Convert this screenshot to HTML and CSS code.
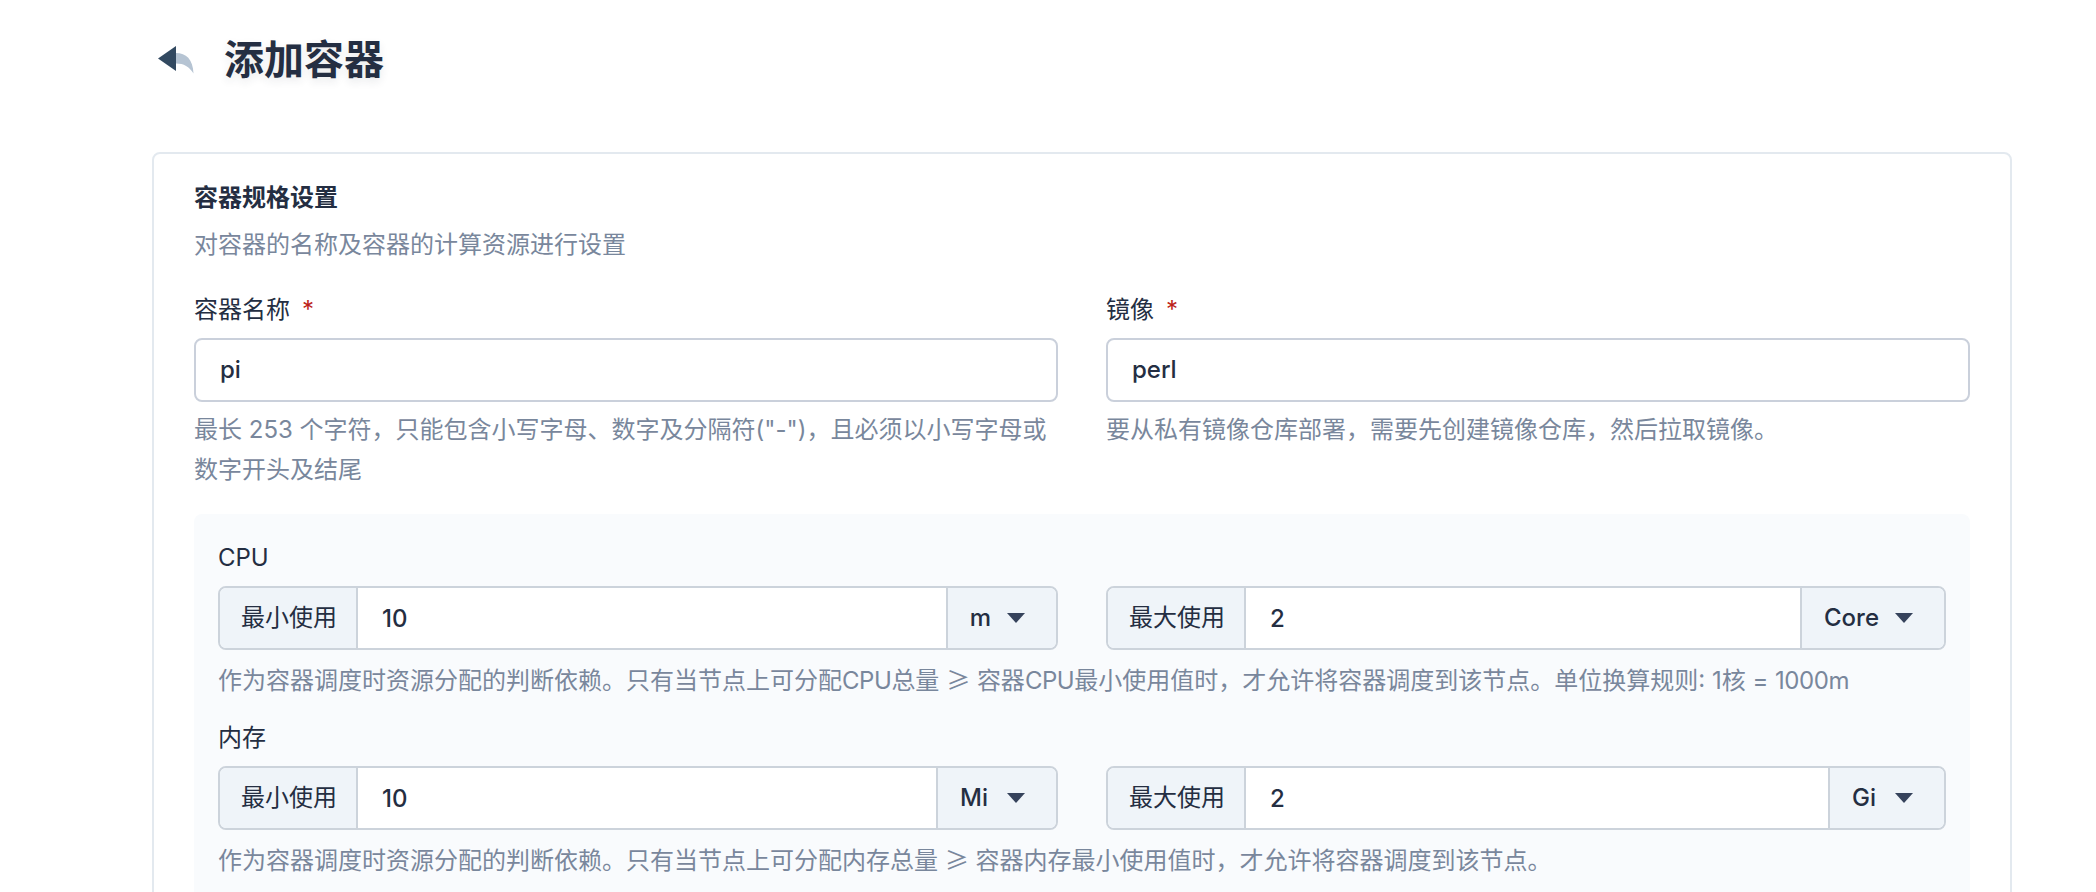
FILE: index.html
```html
<!DOCTYPE html>
<html lang="zh-CN">
<head>
<meta charset="utf-8">
<title>添加容器</title>
<link rel="stylesheet" href="styles.css">
</head>
<body>
<div class="page">
  <header class="header">
    <svg class="back" viewBox="0 0 36 28" aria-hidden="true">
      <path fill="#b6c4d3" d="M18 7C28 7 35 13 35.500 27.500C31 20.500 26 17.500 18 17.500Z"/>
      <path fill="#324960" d="M0 12.500L18 0V25Z"/>
    </svg>
    <h1 class="page-title">添加容器</h1>
  </header>
  <main class="card">
    <h2 class="section-title">容器规格设置</h2>
    <p class="section-desc">对容器的名称及容器的计算资源进行设置</p>
    <div class="cols">
      <div class="field">
        <label class="label">容器名称<span class="req">*</span></label>
        <div class="input">pi</div>
        <p class="hint">最长 253 个字符，只能包含小写字母、数字及分隔符("-")，且必须以小写字母或数字开头及结尾</p>
      </div>
      <div class="field">
        <label class="label">镜像<span class="req">*</span></label>
        <div class="input">perl</div>
        <p class="hint">要从私有镜像仓库部署，需要先创建镜像仓库，然后拉取镜像。</p>
      </div>
    </div>
    <section class="resources">
      <div class="res-label">CPU</div>
      <div class="cols">
        <div class="group">
          <span class="addon">最小使用</span>
          <span class="value">10</span>
          <span class="unit">m<svg class="caret" viewBox="0 0 18 10"><path d="M0 0H18L9 10Z"/></svg></span>
        </div>
        <div class="group">
          <span class="addon">最大使用</span>
          <span class="value">2</span>
          <span class="unit">Core<svg class="caret" viewBox="0 0 18 10"><path d="M0 0H18L9 10Z"/></svg></span>
        </div>
      </div>
      <p class="res-hint">作为容器调度时资源分配的判断依赖。只有当节点上可分配<span class="tight">CPU</span>总量 <span class="ge">≥</span> 容器<span class="tight">CPU</span>最小使用值时，才允许将容器调度到该节点。单位换算规则: 1核 = <span class="tight">1000m</span></p>
      <div class="res-label">内存</div>
      <div class="cols">
        <div class="group">
          <span class="addon">最小使用</span>
          <span class="value">10</span>
          <span class="unit unit-short">Mi<svg class="caret" viewBox="0 0 18 10"><path d="M0 0H18L9 10Z"/></svg></span>
        </div>
        <div class="group">
          <span class="addon">最大使用</span>
          <span class="value">2</span>
          <span class="unit unit-short">Gi<svg class="caret" viewBox="0 0 18 10"><path d="M0 0H18L9 10Z"/></svg></span>
        </div>
      </div>
      <p class="res-hint">作为容器调度时资源分配的判断依赖。只有当节点上可分配内存总量 <span class="ge">≥</span> 容器内存最小使用值时，才允许将容器调度到该节点。</p>
    </section>
  </main>
</div>
</body>
</html>
```

FILE: styles.css
```css
* { box-sizing: border-box; }
html, body { margin: 0; padding: 0; background: #fff; }
body {
  font-family: Inter, "Noto Sans CJK SC", sans-serif;
  font-size: 24px;
  line-height: 40px;
  color: #242e42;
}
.page { height: 100vh; overflow: hidden; padding: 32px 84px 0 152px; }

.header { display: flex; align-items: center; height: 56px; margin-bottom: 64px; padding-left: 6px; }
.back { width: 36px; height: 28px; margin-right: 30px; }
.page-title {
  margin: 0;
  font-size: 40px;
  line-height: 56px;
  font-weight: 700;
  text-shadow: 0 4px 8px rgba(36, 46, 66, .1);
}

.card { border: 2px solid #e3e9ef; border-radius: 8px; padding: 24px 40px 40px; }
.section-title { margin: 0; font-size: 24px; line-height: 40px; font-weight: 700; }
.section-desc { margin: 7px 0 25px; color: #79879c; }

.cols { display: grid; grid-template-columns: 1fr 1fr; column-gap: 48px; }
.label { display: block; margin-bottom: 8px; }
.req { margin-left: 12px; color: #bd1f1a; }
.input {
  height: 64px;
  padding: 0 24px;
  border: 2px solid #cad0db;
  border-radius: 8px;
  background: #fff;
  font-weight: 500;
  line-height: 60px;
}
.hint { margin: 8px 0 0; color: #79879c; }

.resources { margin-top: 24px; padding: 24px 24px 40px; background: #f9fbfd; border-radius: 8px; }
.res-label { margin-bottom: 8px; }
.res-hint { margin: 11px 0 17px; height: 40px; color: #79879c; white-space: nowrap; }
.ge { font-family: "Noto Sans CJK SC", sans-serif; line-height: 1; }
.tight { letter-spacing: -.45px; }

.group {
  display: flex;
  height: 64px;
  border: 2px solid #ccd3db;
  border-radius: 8px;
  overflow: hidden;
  background: #fff;
  line-height: 60px;
}
.addon { flex: none; padding: 0 19px 0 21px; background: #eff4f9; border-right: 2px solid #ccd3db; }
.value { flex: 1; padding: 1px 24px 0; font-weight: 500; }
.unit {
  flex: none;
  display: flex;
  align-items: center;
  gap: 16px;
  padding: 0 31px 0 22px;
  background: #eff4f9;
  border-left: 2px solid #ccd3db;
  font-weight: 500;
}
.unit-short { gap: 19px; }
.caret { width: 18px; height: 10px; fill: #36435c; }
```
